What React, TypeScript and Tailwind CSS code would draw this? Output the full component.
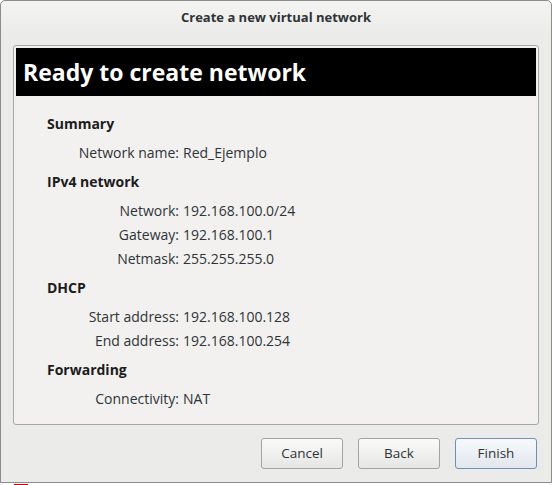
import React from "react";

const font = { fontFamily: '"Open Sans", "DejaVu Sans", sans-serif' };

function Row({ label, value }: { label: string; value: string }) {
  return (
    <div className="flex h-[24px] items-center">
      <div className="w-[163px] text-right">{label}</div>
      <div className="ml-[4px]">{value}</div>
    </div>
  );
}

function Section({ title, rows }: { title: string; rows: [string, string][] }) {
  return (
    <div className="flex flex-col">
      <div className="flex h-[24px] items-center pl-[31px] font-bold text-[#1c1c1c]">{title}</div>
      <div className="mt-[5px] flex flex-col">
        {rows.map(([l, v]) => (
          <Row key={l} label={l} value={v} />
        ))}
      </div>
    </div>
  );
}

export default function App() {
  return (
    <div className="relative h-[485px] w-[552px] overflow-hidden bg-white text-[14px] text-[#2e3436]" style={font}>
      <div className="flex h-[483px] w-[552px] flex-col rounded-t-[5px] border border-[#8c8c8c] bg-[#ebebea]">
        <div className="flex h-[34px] items-center justify-center rounded-t-[5px] bg-gradient-to-b from-[#f4f4f3] to-[#ebebea] pb-[1px] text-[13px] font-bold text-[#2e3436]">
          Create a new virtual network
        </div>
        <div className="mx-[12px] mt-[10px] flex h-[380px] flex-col rounded-[3px] border border-[#a8a8a8] bg-[#f2f1f0] p-[2px]">
          <div className="flex h-[48px] items-center bg-black pl-[7px] text-[23px] font-bold text-white">
            Ready to create network
          </div>
          <div className="mt-[15px] flex flex-col gap-[5px]">
            <Section title="Summary" rows={[["Network name:", "Red_Ejemplo"]]} />
            <Section
              title="IPv4 network"
              rows={[
                ["Network:", "192.168.100.0/24"],
                ["Gateway:", "192.168.100.1"],
                ["Netmask:", "255.255.255.0"],
              ]}
            />
            <Section
              title="DHCP"
              rows={[
                ["Start address:", "192.168.100.128"],
                ["End address:", "192.168.100.254"],
              ]}
            />
            <Section title="Forwarding" rows={[["Connectivity:", "NAT"]]} />
          </div>
        </div>
        <div className="mt-[13px] flex justify-end gap-[15px] pr-[14px] text-[13.5px]">
          <button className="flex h-[31px] w-[82px] items-center justify-center rounded-[3px] border border-[#a3a3a3] bg-gradient-to-b from-[#fafafa] to-[#e6e6e5] text-[#2e3436]">
            Cancel
          </button>
          <button className="flex h-[31px] w-[82px] items-center justify-center rounded-[3px] border border-[#a3a3a3] bg-gradient-to-b from-[#fafafa] to-[#e6e6e5] text-[#2e3436]">
            Back
          </button>
          <button className="flex h-[31px] w-[82px] items-center justify-center rounded-[3px] border border-[#7090b8] bg-gradient-to-b from-[#f7f9fb] to-[#e2e7ed] text-[#2e3436]">
            Finish
          </button>
        </div>
      </div>
      <div className="absolute left-[14px] top-[484px] h-[1px] w-[14px] bg-[#d00000]" />
    </div>
  );
}
